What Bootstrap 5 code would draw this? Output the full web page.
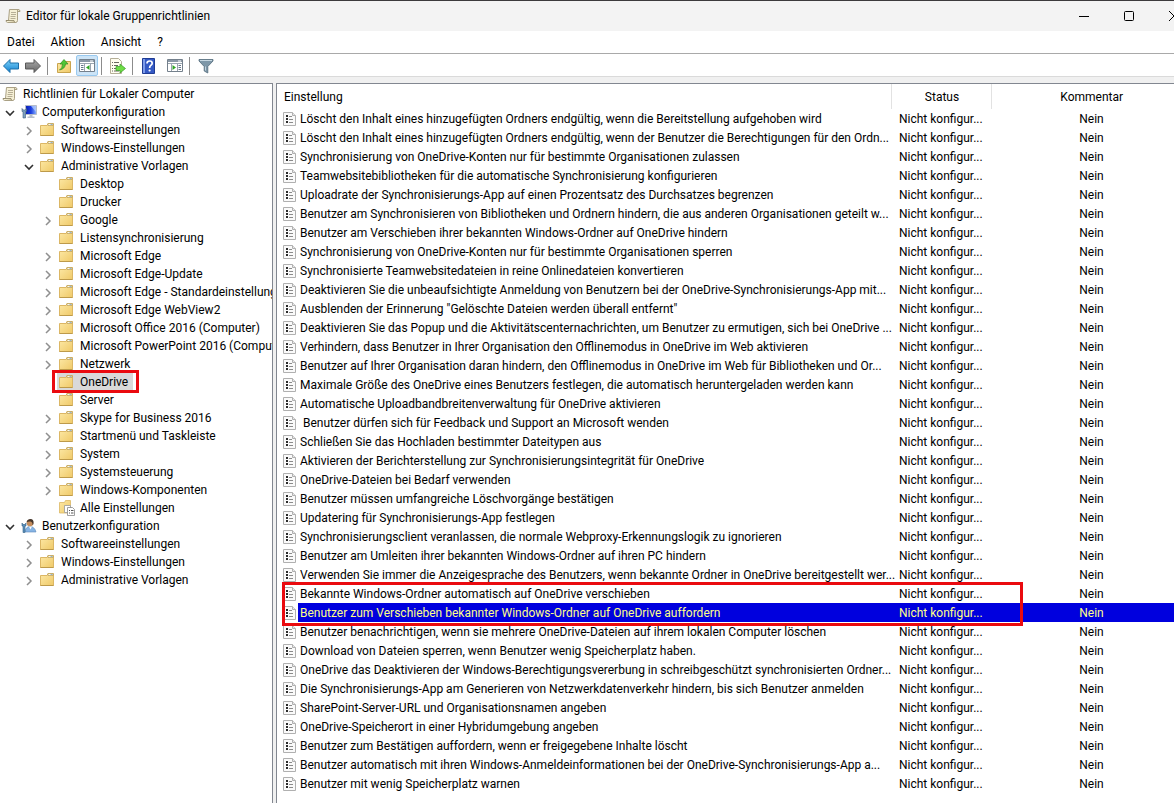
<!DOCTYPE html>
<html lang="de">
<head>
<meta charset="utf-8">
<meta name="viewport" content="width=device-width, initial-scale=1">
<title>Editor für lokale Gruppenrichtlinien</title>
<link href="https://cdn.jsdelivr.net/npm/bootstrap@5.3.0/dist/css/bootstrap.min.css" rel="stylesheet">
<style>
  body { font-family: Roboto, "Open Sans", sans-serif; font-size: 12px; line-height: 18px; color: #000; background: #f0f0f0; }
  svg { display: block; flex: none; }
  button { font: inherit; color: inherit; background: none; border: 0; padding: 0; }
  .titlebar { height: 31px; background: #f3f3f3; border-top: 1px solid #3c3a3c; padding-left: 5px; gap: 5px; }
  .caption-btn { width: 45px; height: 30px; }
  .caption-set { margin-right: -22px; }
  .menubar { height: 22px; background: #fff; padding-left: 7px; gap: 16px; }
  .toolbar { height: 24px; padding-top: 1px; background: #fff; border-top: 1px solid #a9a9a9; border-bottom: 1px solid #dadada; }
  .tool { width: 22px; height: 20px; }
  .tool.active { height: 21px; margin-left: 1px; background: #cce4f7; border: 1px solid #99c9ef; border-radius: 2px; }
  .tool-sep { width: 1px; height: 18px; background: #8c8c8c; margin: 0 5px 0 3px; }
  .panes { margin-top: 6px; gap: 3px; }
  .tree-pane { width: 273px; flex: none; background: #fff; border: solid #828790; border-width: 1px 1px 0 0; padding-top: 1px; }
  .list-pane { min-width: 0; background: #fff; border: solid #828790; border-width: 1px 0 0 1px; }
  .tree-pane ul { list-style: none; margin: 0; padding: 0; }
  .tree-pane ul ul { padding-left: 19px; }
  .node { display: flex; align-items: center; height: 18px; white-space: nowrap; }
  .twist { width: 19px; height: 18px; flex: none; margin-right: 2px; padding-top: 1px; display: flex; align-items: center; justify-content: center; }
  .node-name { color: #000; text-decoration: none; padding-left: 5px; }
  .root-node { padding-left: 2px; }
  .picked { background: linear-gradient(#d9d9d9, #d9d9d9) 19px 0 / 76px 100% no-repeat; position: relative; }
  .mark-node { position: absolute; left: 14px; top: -3px; width: 87px; height: 23px; border: 3px solid #ea0a0f; }
  .policies { table-layout: fixed; color: #000; --bs-table-bg: #fff; --bs-table-color: #000; }
  .policies th { height: 25px; padding: 0 5px 0 7px; font-weight: 400; line-height: 18px; text-align: center; vertical-align: middle; border-right: 1px solid #e2e2e2; }
  .policies th:first-child { text-align: left; }
  .policies th:last-child { border: 0; padding: 0 0 0 18px; }
  .policies td { height: 19px; padding: 1px 0 0 8px; line-height: 18px; white-space: nowrap; vertical-align: middle; }
  .policies td:first-child { padding-left: 6px; }
  .policies td:last-child { padding-left: 18px; text-align: center; }
  .col-status { width: 100px; }
  .col-note { width: 183px; }
  .policy { display: flex; align-items: center; gap: 4px; height: 18px; }
  .policy svg { width: 13px; height: 14px; }
  .chosen td { background: #0000de; color: #ffff8a; box-shadow: none; }
  .chosen td:first-child { background: linear-gradient(90deg, #fff 21px, #0000de 21px); }
  .mark-host { position: relative; }
  .mark-rows { position: absolute; left: 5px; right: -132px; top: -2px; height: 44px; border: 3px solid #ea0a0f; }
</style>
</head>
<body class="min-vh-100 d-flex flex-column overflow-hidden">

<svg width="0" height="0" class="position-absolute" aria-hidden="true">
  <defs>
    <linearGradient id="gFolder" x1="0" y1="0" x2="1" y2="1"><stop offset="0" stop-color="#fde9a6"/><stop offset="1" stop-color="#efc968"/></linearGradient>
    <linearGradient id="gBlue" x1="0" y1="0" x2="0" y2="1"><stop offset="0" stop-color="#7fd4fa"/><stop offset="1" stop-color="#1180d0"/></linearGradient>
    <linearGradient id="gGrey" x1="0" y1="0" x2="0" y2="1"><stop offset="0" stop-color="#aaa"/><stop offset="1" stop-color="#666"/></linearGradient>
    <linearGradient id="gScreen" x1="0" y1="0" x2="1" y2="0"><stop offset="0" stop-color="#0a1fb4"/><stop offset=".5" stop-color="#1c3fe0"/><stop offset="1" stop-color="#8fb6ff"/></linearGradient>
    <symbol id="folder" viewBox="0 0 16 16">
      <path d="M.5 3.500h6.500l1-2h5.500v12H.5z" fill="url(#gFolder)" stroke="#dcb765"/>
      <path d="M8 1.500h5v2H8z" fill="#fffbe8" stroke="#b99c55" stroke-width=".7"/>
      <path d="M10.500 2.500h2" stroke="#7fa4c4" stroke-width=".8"/>
      <path d="M.5 13.500h13" fill="none" stroke="#bd9a4a"/>
    </symbol>
    <symbol id="scroll" viewBox="0 0 16 16">
      <path d="M4.500 1.500h9q1.500 0 1.500 2h-2.500v9q0 2-2 2h-8q-1.500-.2-1.500-2h2.500z" fill="#f6f0d6" stroke="#aaa185"/>
      <path d="M1 12.500h8q0 2 1.500 2M12.500 3.500q-.2-1.500 1-2" fill="#d8ceaa" stroke="#8d8467" stroke-width=".8"/>
      <path d="M6 4.500h5M6 6.500h5M5.500 8.500h5M5.500 10.500h5" stroke="#b0a78f" stroke-width=".9"/>
    </symbol>
    <symbol id="computer" viewBox="0 0 16 16">
      <path d="M4.500 1.500h11v9h-11z" fill="url(#gScreen)" stroke="#b6bcc9"/>
      <path d="M10 2h5v6z" fill="#b9d2ff" opacity=".7"/>
      <path d="M8.500 11h3v1.500h2v1.500h-7v-1.500h2z" fill="#b7bfca"/>
      <path d="M1 4.500v3h1V14h2.500V7.500h1v-3L4.300 6h-2z" fill="#7d9fbe" stroke="#3f5f80" stroke-width=".6"/>
    </symbol>
    <symbol id="person" viewBox="0 0 16 16">
      <path d="M4 14q.5-5.500 5-5.500t6 5.500z" fill="#86b4e4" stroke="#5b88b9" stroke-width=".6"/>
      <path d="M8 8.500l1.500 3 1.500-3z" fill="#fff"/>
      <circle cx="9" cy="5" r="3.300" fill="#c58d5d"/>
      <path d="M5.500 4.500Q6 1 9.500 1t3 4.500q-.5 2-1 1.500.3-3-2-3.500t-4 1z" fill="#46372c"/>
      <path d="M1 5v3h1v6.500h2V8h1V5L4 6.500H2z" fill="#5c8fb8" stroke="#34638a" stroke-width=".6"/>
    </symbol>
    <symbol id="allset" viewBox="0 0 16 16">
      <path d="M.5 2.500h5l1-2h5V13H.5z" fill="url(#gFolder)" stroke="#dcb765" stroke-width=".8"/>
      <path d="M5.500 5.500h6v7h-6z" fill="#fff" stroke="#999" stroke-width=".8"/>
      <path d="M8.500 7.500h5l2 2v6h-7z" fill="#fff" stroke="#888" stroke-width=".8"/>
      <path d="M10 10.500h1M12 10.500h2.500M10 13h1M12 13h2.500" stroke="#555"/>
    </symbol>
    <symbol id="policy" viewBox="0 0 13 14">
      <path d="M.5.500h9l3 3v10H.5z" fill="#fafafa" stroke="#b0b0b0"/>
      <path d="M9.500.500v3h3" fill="#e8e8e8" stroke="#b0b0b0"/>
      <path d="M3 3h2v2H3zM3 6h2v2H3zM3 9h2v2H3z" fill="#2a2a2a"/>
      <path d="M6 4.500h3M6 7.500h4M6 10.500h4" stroke="#8b8b8b"/>
    </symbol>
    <symbol id="closed" viewBox="0 0 10 10"><path d="M3 1l4 4-4 4" fill="none" stroke="#8f8f8f" stroke-width="1.500"/></symbol>
    <symbol id="opened" viewBox="0 0 10 10"><path d="M1 3l4 4 4-4" fill="none" stroke="#303030" stroke-width="1.600"/></symbol>
  </defs>
</svg>

<header class="titlebar d-flex align-items-center">
  <svg width="16" height="16"><use href="#scroll"/></svg>
  <span>Editor für lokale Gruppenrichtlinien</span>
  <div class="caption-set d-flex ms-auto">
    <button type="button" class="caption-btn d-flex align-items-center justify-content-center" aria-label="Minimieren"><svg width="12" height="10"><path d="M1 5.500h10" stroke="#000"/></svg></button>
    <button type="button" class="caption-btn d-flex align-items-center justify-content-center" aria-label="Maximieren"><svg width="12" height="10"><rect x="1.500" y=".5" width="9" height="9" rx="1" fill="none" stroke="#000"/></svg></button>
    <button type="button" class="caption-btn d-flex align-items-center justify-content-center" aria-label="Schließen"><svg width="12" height="10"><path d="M1 0l10 10M11 0L1 10" stroke="#000"/></svg></button>
  </div>
</header>

<nav class="menubar d-flex align-items-center" aria-label="Menü">
  <button type="button">Datei</button>
  <button type="button">Aktion</button>
  <button type="button">Ansicht</button>
  <button type="button">?</button>
</nav>

<div class="toolbar d-flex align-items-center" role="toolbar" aria-label="Werkzeuge">
  <button type="button" class="tool d-flex align-items-center justify-content-center" aria-label="Zurück"><svg width="18" height="16"><path d="M1.500 8l6.500-6.500v3.500h8.500v6H8v3.500z" fill="url(#gBlue)" stroke="#1b6ea9"/></svg></button>
  <button type="button" class="tool d-flex align-items-center justify-content-center" aria-label="Vorwärts"><svg width="18" height="16"><path d="M16.500 8L10 1.500v3.500H1.500v6H10v3.500z" fill="url(#gGrey)" stroke="#595959"/></svg></button>
  <span class="tool-sep"></span>
  <button type="button" class="tool d-flex align-items-center justify-content-center" aria-label="Eine Ebene nach oben"><svg width="16" height="16"><path d="M1.500 5.500h5l1.500-2h6.500v11h-13z" fill="url(#gFolder)" stroke="#c9a44e"/><path d="M3.500 12q3-1.500 3-6H4L8 1.500 12 6H9.500q-.5 5-6 6z" fill="#4fc636" stroke="#2c8c1e" stroke-width=".7"/></svg></button>
  <button type="button" class="tool active d-flex align-items-center justify-content-center" aria-label="Konsolenstruktur ein-/ausblenden"><svg width="16" height="13"><path d="M.5.500h15v12H.5z" fill="#fff" stroke="#74808c"/><path d="M1 1h14v2H1z" fill="#8a98a6"/><path d="M11 2h3" stroke="#fff"/><path d="M1 4.500h14" stroke="#9aa5b0"/><path d="M5.500 5v7M11.500 5v7" stroke="#9aa5b0"/><path d="M2 6.500h2.500M2 8.500h2.500M2 10.500h2.500" stroke="#66788a"/><path d="M10.500 6v5L7 8.500z" fill="#2fa525"/></svg></button>
  <span class="tool-sep"></span>
  <button type="button" class="tool d-flex align-items-center justify-content-center" aria-label="Liste exportieren"><svg width="16" height="16"><path d="M.5.500h8l3 3v12H.5z" fill="#fffdf0" stroke="#b5af98"/><path d="M2 4.500h1M4 4.500h5M2 7.500h1M4 7.500h4M2 10.500h1M4 10.500h3M2 13h1M4 13h5" stroke="#66665e"/><path d="M6 8.500h4V6l5.500 4.500L10 15v-2.500H6z" fill="#6fdd45" stroke="#38992a" stroke-width=".7"/></svg></button>
  <span class="tool-sep"></span>
  <button type="button" class="tool d-flex align-items-center justify-content-center" aria-label="Hilfe"><svg width="14" height="16"><path d="M.5.500h12v15H.5z" fill="#3459c4" stroke="#1f3c94"/><path d="M1 1h2v14H1z" fill="#7d9be8"/><path d="M5 5.500q0-2.500 2.600-2.500t2.600 2.300q0 1.200-1.300 2T7.600 10" fill="none" stroke="#fff" stroke-width="1.700"/><circle cx="7.600" cy="12.500" r="1.100" fill="#fff"/></svg></button>
  <button type="button" class="tool d-flex align-items-center justify-content-center ms-1" aria-label="Aktionsbereich ein-/ausblenden"><svg width="16" height="13"><path d="M.5.500h15v12H.5z" fill="#fff" stroke="#74808c"/><path d="M1 1h14v2H1z" fill="#8a98a6"/><path d="M11 2h3" stroke="#fff"/><path d="M1 4.500h14" stroke="#9aa5b0"/><path d="M4.500 5v7M10.500 5v7" stroke="#9aa5b0"/><path d="M11.500 6.500H14M11.500 8.500H14M11.500 10.500H14" stroke="#66788a"/><path d="M5.500 6v5L9 8.500z" fill="#2fa525"/></svg></button>
  <span class="tool-sep"></span>
  <button type="button" class="tool d-flex align-items-center justify-content-center" aria-label="Filter"><svg width="16" height="16"><path d="M1 1.500h14v1.500L9.800 8.500V15l-3.600-2V8.500L1 3z" fill="#7e97a8" stroke="#526a7a" stroke-width=".8"/><path d="M2 2.500h12" stroke="#c7d8e2"/><path d="M7.500 8.500v4" stroke="#c3d3de"/></svg></button>
</div>

<main class="panes d-flex flex-grow-1">
  <nav class="tree-pane overflow-hidden" aria-label="Konsolenstruktur">
    <div class="node root-node"><svg width="16" height="16"><use href="#scroll"/></svg><a class="node-name" href="#">Richtlinien für Lokaler Computer</a></div>
    <ul>
      <li>
        <div class="node"><button type="button" class="twist" aria-label="Reduzieren"><svg width="10" height="10"><use href="#opened"/></svg></button><svg width="16" height="16"><use href="#computer"/></svg><a class="node-name" href="#">Computerkonfiguration</a></div>
        <ul>
          <li class="node"><button type="button" class="twist" aria-label="Erweitern"><svg width="10" height="10"><use href="#closed"/></svg></button><svg width="16" height="16"><use href="#folder"/></svg><a class="node-name" href="#">Softwareeinstellungen</a></li>
          <li class="node"><button type="button" class="twist" aria-label="Erweitern"><svg width="10" height="10"><use href="#closed"/></svg></button><svg width="16" height="16"><use href="#folder"/></svg><a class="node-name" href="#">Windows-Einstellungen</a></li>
          <li>
            <div class="node"><button type="button" class="twist" aria-label="Reduzieren"><svg width="10" height="10"><use href="#opened"/></svg></button><svg width="16" height="16"><use href="#folder"/></svg><a class="node-name" href="#">Administrative Vorlagen</a></div>
            <ul>
              <li class="node"><span class="twist"></span><svg width="16" height="16"><use href="#folder"/></svg><a class="node-name" href="#">Desktop</a></li>
              <li class="node"><span class="twist"></span><svg width="16" height="16"><use href="#folder"/></svg><a class="node-name" href="#">Drucker</a></li>
              <li class="node"><button type="button" class="twist" aria-label="Erweitern"><svg width="10" height="10"><use href="#closed"/></svg></button><svg width="16" height="16"><use href="#folder"/></svg><a class="node-name" href="#">Google</a></li>
              <li class="node"><span class="twist"></span><svg width="16" height="16"><use href="#folder"/></svg><a class="node-name" href="#">Listensynchronisierung</a></li>
              <li class="node"><button type="button" class="twist" aria-label="Erweitern"><svg width="10" height="10"><use href="#closed"/></svg></button><svg width="16" height="16"><use href="#folder"/></svg><a class="node-name" href="#">Microsoft Edge</a></li>
              <li class="node"><button type="button" class="twist" aria-label="Erweitern"><svg width="10" height="10"><use href="#closed"/></svg></button><svg width="16" height="16"><use href="#folder"/></svg><a class="node-name" href="#">Microsoft Edge-Update</a></li>
              <li class="node"><button type="button" class="twist" aria-label="Erweitern"><svg width="10" height="10"><use href="#closed"/></svg></button><svg width="16" height="16"><use href="#folder"/></svg><a class="node-name" href="#">Microsoft Edge - Standardeinstellungen</a></li>
              <li class="node"><button type="button" class="twist" aria-label="Erweitern"><svg width="10" height="10"><use href="#closed"/></svg></button><svg width="16" height="16"><use href="#folder"/></svg><a class="node-name" href="#">Microsoft Edge WebView2</a></li>
              <li class="node"><button type="button" class="twist" aria-label="Erweitern"><svg width="10" height="10"><use href="#closed"/></svg></button><svg width="16" height="16"><use href="#folder"/></svg><a class="node-name" href="#">Microsoft Office 2016 (Computer)</a></li>
              <li class="node"><button type="button" class="twist" aria-label="Erweitern"><svg width="10" height="10"><use href="#closed"/></svg></button><svg width="16" height="16"><use href="#folder"/></svg><a class="node-name" href="#">Microsoft PowerPoint 2016 (Computer)</a></li>
              <li class="node"><button type="button" class="twist" aria-label="Erweitern"><svg width="10" height="10"><use href="#closed"/></svg></button><svg width="16" height="16"><use href="#folder"/></svg><a class="node-name" href="#">Netzwerk</a></li>
              <li class="node picked"><span class="twist"></span><svg width="16" height="16"><use href="#folder"/></svg><a class="node-name" href="#" aria-current="true">OneDrive</a><span class="mark-node"></span></li>
              <li class="node"><span class="twist"></span><svg width="16" height="16"><use href="#folder"/></svg><a class="node-name" href="#">Server</a></li>
              <li class="node"><button type="button" class="twist" aria-label="Erweitern"><svg width="10" height="10"><use href="#closed"/></svg></button><svg width="16" height="16"><use href="#folder"/></svg><a class="node-name" href="#">Skype for Business 2016</a></li>
              <li class="node"><button type="button" class="twist" aria-label="Erweitern"><svg width="10" height="10"><use href="#closed"/></svg></button><svg width="16" height="16"><use href="#folder"/></svg><a class="node-name" href="#">Startmenü und Taskleiste</a></li>
              <li class="node"><button type="button" class="twist" aria-label="Erweitern"><svg width="10" height="10"><use href="#closed"/></svg></button><svg width="16" height="16"><use href="#folder"/></svg><a class="node-name" href="#">System</a></li>
              <li class="node"><button type="button" class="twist" aria-label="Erweitern"><svg width="10" height="10"><use href="#closed"/></svg></button><svg width="16" height="16"><use href="#folder"/></svg><a class="node-name" href="#">Systemsteuerung</a></li>
              <li class="node"><button type="button" class="twist" aria-label="Erweitern"><svg width="10" height="10"><use href="#closed"/></svg></button><svg width="16" height="16"><use href="#folder"/></svg><a class="node-name" href="#">Windows-Komponenten</a></li>
              <li class="node"><span class="twist"></span><svg width="16" height="16"><use href="#allset"/></svg><a class="node-name" href="#">Alle Einstellungen</a></li>
            </ul>
          </li>
        </ul>
      </li>
      <li>
        <div class="node"><button type="button" class="twist" aria-label="Reduzieren"><svg width="10" height="10"><use href="#opened"/></svg></button><svg width="16" height="16"><use href="#person"/></svg><a class="node-name" href="#">Benutzerkonfiguration</a></div>
        <ul>
          <li class="node"><button type="button" class="twist" aria-label="Erweitern"><svg width="10" height="10"><use href="#closed"/></svg></button><svg width="16" height="16"><use href="#folder"/></svg><a class="node-name" href="#">Softwareeinstellungen</a></li>
          <li class="node"><button type="button" class="twist" aria-label="Erweitern"><svg width="10" height="10"><use href="#closed"/></svg></button><svg width="16" height="16"><use href="#folder"/></svg><a class="node-name" href="#">Windows-Einstellungen</a></li>
          <li class="node"><button type="button" class="twist" aria-label="Erweitern"><svg width="10" height="10"><use href="#closed"/></svg></button><svg width="16" height="16"><use href="#folder"/></svg><a class="node-name" href="#">Administrative Vorlagen</a></li>
        </ul>
      </li>
    </ul>
  </nav>

  <section class="list-pane flex-grow-1 overflow-hidden">
    <table class="policies table table-borderless m-0">
      <colgroup><col><col class="col-status"><col class="col-note"></colgroup>
      <thead><tr><th scope="col">Einstellung</th><th scope="col">Status</th><th scope="col">Kommentar</th></tr></thead>
      <tbody>
        <tr><td><div class="policy"><svg><use href="#policy"/></svg><span>Löscht den Inhalt eines hinzugefügten Ordners endgültig, wenn die Bereitstellung aufgehoben wird</span></div></td><td>Nicht konfigur...</td><td>Nein</td></tr>
        <tr><td><div class="policy"><svg><use href="#policy"/></svg><span>Löscht den Inhalt eines hinzugefügten Ordners endgültig, wenn der Benutzer die Berechtigungen für den Ordn...</span></div></td><td>Nicht konfigur...</td><td>Nein</td></tr>
        <tr><td><div class="policy"><svg><use href="#policy"/></svg><span>Synchronisierung von OneDrive-Konten nur für bestimmte Organisationen zulassen</span></div></td><td>Nicht konfigur...</td><td>Nein</td></tr>
        <tr><td><div class="policy"><svg><use href="#policy"/></svg><span>Teamwebsitebibliotheken für die automatische Synchronisierung konfigurieren</span></div></td><td>Nicht konfigur...</td><td>Nein</td></tr>
        <tr><td><div class="policy"><svg><use href="#policy"/></svg><span>Uploadrate der Synchronisierungs-App auf einen Prozentsatz des Durchsatzes begrenzen</span></div></td><td>Nicht konfigur...</td><td>Nein</td></tr>
        <tr><td><div class="policy"><svg><use href="#policy"/></svg><span>Benutzer am Synchronisieren von Bibliotheken und Ordnern hindern, die aus anderen Organisationen geteilt w...</span></div></td><td>Nicht konfigur...</td><td>Nein</td></tr>
        <tr><td><div class="policy"><svg><use href="#policy"/></svg><span>Benutzer am Verschieben ihrer bekannten Windows-Ordner auf OneDrive hindern</span></div></td><td>Nicht konfigur...</td><td>Nein</td></tr>
        <tr><td><div class="policy"><svg><use href="#policy"/></svg><span>Synchronisierung von OneDrive-Konten nur für bestimmte Organisationen sperren</span></div></td><td>Nicht konfigur...</td><td>Nein</td></tr>
        <tr><td><div class="policy"><svg><use href="#policy"/></svg><span>Synchronisierte Teamwebsitedateien in reine Onlinedateien konvertieren</span></div></td><td>Nicht konfigur...</td><td>Nein</td></tr>
        <tr><td><div class="policy"><svg><use href="#policy"/></svg><span>Deaktivieren Sie die unbeaufsichtigte Anmeldung von Benutzern bei der OneDrive-Synchronisierungs-App mit...</span></div></td><td>Nicht konfigur...</td><td>Nein</td></tr>
        <tr><td><div class="policy"><svg><use href="#policy"/></svg><span>Ausblenden der Erinnerung "Gelöschte Dateien werden überall entfernt"</span></div></td><td>Nicht konfigur...</td><td>Nein</td></tr>
        <tr><td><div class="policy"><svg><use href="#policy"/></svg><span>Deaktivieren Sie das Popup und die Aktivitätscenternachrichten, um Benutzer zu ermutigen, sich bei OneDrive ...</span></div></td><td>Nicht konfigur...</td><td>Nein</td></tr>
        <tr><td><div class="policy"><svg><use href="#policy"/></svg><span>Verhindern, dass Benutzer in Ihrer Organisation den Offlinemodus in OneDrive im Web aktivieren</span></div></td><td>Nicht konfigur...</td><td>Nein</td></tr>
        <tr><td><div class="policy"><svg><use href="#policy"/></svg><span>Benutzer auf Ihrer Organisation daran hindern, den Offlinemodus in OneDrive im Web für Bibliotheken und Or...</span></div></td><td>Nicht konfigur...</td><td>Nein</td></tr>
        <tr><td><div class="policy"><svg><use href="#policy"/></svg><span>Maximale Größe des OneDrive eines Benutzers festlegen, die automatisch heruntergeladen werden kann</span></div></td><td>Nicht konfigur...</td><td>Nein</td></tr>
        <tr><td><div class="policy"><svg><use href="#policy"/></svg><span>Automatische Uploadbandbreitenverwaltung für OneDrive aktivieren</span></div></td><td>Nicht konfigur...</td><td>Nein</td></tr>
        <tr><td><div class="policy"><svg><use href="#policy"/></svg><span>&nbsp;Benutzer dürfen sich für Feedback und Support an Microsoft wenden</span></div></td><td>Nicht konfigur...</td><td>Nein</td></tr>
        <tr><td><div class="policy"><svg><use href="#policy"/></svg><span>Schließen Sie das Hochladen bestimmter Dateitypen aus</span></div></td><td>Nicht konfigur...</td><td>Nein</td></tr>
        <tr><td><div class="policy"><svg><use href="#policy"/></svg><span>Aktivieren der Berichterstellung zur Synchronisierungsintegrität für OneDrive</span></div></td><td>Nicht konfigur...</td><td>Nein</td></tr>
        <tr><td><div class="policy"><svg><use href="#policy"/></svg><span>OneDrive-Dateien bei Bedarf verwenden</span></div></td><td>Nicht konfigur...</td><td>Nein</td></tr>
        <tr><td><div class="policy"><svg><use href="#policy"/></svg><span>Benutzer müssen umfangreiche Löschvorgänge bestätigen</span></div></td><td>Nicht konfigur...</td><td>Nein</td></tr>
        <tr><td><div class="policy"><svg><use href="#policy"/></svg><span>Updatering für Synchronisierungs-App festlegen</span></div></td><td>Nicht konfigur...</td><td>Nein</td></tr>
        <tr><td><div class="policy"><svg><use href="#policy"/></svg><span>Synchronisierungsclient veranlassen, die normale Webproxy-Erkennungslogik zu ignorieren</span></div></td><td>Nicht konfigur...</td><td>Nein</td></tr>
        <tr><td><div class="policy"><svg><use href="#policy"/></svg><span>Benutzer am Umleiten ihrer bekannten Windows-Ordner auf ihren PC hindern</span></div></td><td>Nicht konfigur...</td><td>Nein</td></tr>
        <tr><td><div class="policy"><svg><use href="#policy"/></svg><span>Verwenden Sie immer die Anzeigesprache des Benutzers, wenn bekannte Ordner in OneDrive bereitgestellt wer...</span></div></td><td>Nicht konfigur...</td><td>Nein</td></tr>
        <tr><td class="mark-host"><div class="policy"><svg><use href="#policy"/></svg><span>Bekannte Windows-Ordner automatisch auf OneDrive verschieben</span></div><div class="mark-rows"></div></td><td>Nicht konfigur...</td><td>Nein</td></tr>
        <tr class="chosen" aria-selected="true"><td><div class="policy"><svg><use href="#policy"/></svg><span>Benutzer zum Verschieben bekannter Windows-Ordner auf OneDrive auffordern</span></div></td><td>Nicht konfigur...</td><td>Nein</td></tr>
        <tr><td><div class="policy"><svg><use href="#policy"/></svg><span>Benutzer benachrichtigen, wenn sie mehrere OneDrive-Dateien auf ihrem lokalen Computer löschen</span></div></td><td>Nicht konfigur...</td><td>Nein</td></tr>
        <tr><td><div class="policy"><svg><use href="#policy"/></svg><span>Download von Dateien sperren, wenn Benutzer wenig Speicherplatz haben.</span></div></td><td>Nicht konfigur...</td><td>Nein</td></tr>
        <tr><td><div class="policy"><svg><use href="#policy"/></svg><span>OneDrive das Deaktivieren der Windows-Berechtigungsvererbung in schreibgeschützt synchronisierten Ordner...</span></div></td><td>Nicht konfigur...</td><td>Nein</td></tr>
        <tr><td><div class="policy"><svg><use href="#policy"/></svg><span>Die Synchronisierungs-App am Generieren von Netzwerkdatenverkehr hindern, bis sich Benutzer anmelden</span></div></td><td>Nicht konfigur...</td><td>Nein</td></tr>
        <tr><td><div class="policy"><svg><use href="#policy"/></svg><span>SharePoint-Server-URL und Organisationsnamen angeben</span></div></td><td>Nicht konfigur...</td><td>Nein</td></tr>
        <tr><td><div class="policy"><svg><use href="#policy"/></svg><span>OneDrive-Speicherort in einer Hybridumgebung angeben</span></div></td><td>Nicht konfigur...</td><td>Nein</td></tr>
        <tr><td><div class="policy"><svg><use href="#policy"/></svg><span>Benutzer zum Bestätigen auffordern, wenn er freigegebene Inhalte löscht</span></div></td><td>Nicht konfigur...</td><td>Nein</td></tr>
        <tr><td><div class="policy"><svg><use href="#policy"/></svg><span>Benutzer automatisch mit ihren Windows-Anmeldeinformationen bei der OneDrive-Synchronisierungs-App a...</span></div></td><td>Nicht konfigur...</td><td>Nein</td></tr>
        <tr><td><div class="policy"><svg><use href="#policy"/></svg><span>Benutzer mit wenig Speicherplatz warnen</span></div></td><td>Nicht konfigur...</td><td>Nein</td></tr>
      </tbody>
    </table>
  </section>
</main>

<script src="https://cdn.jsdelivr.net/npm/bootstrap@5.3.0/dist/js/bootstrap.bundle.min.js"></script>
</body>
</html>
